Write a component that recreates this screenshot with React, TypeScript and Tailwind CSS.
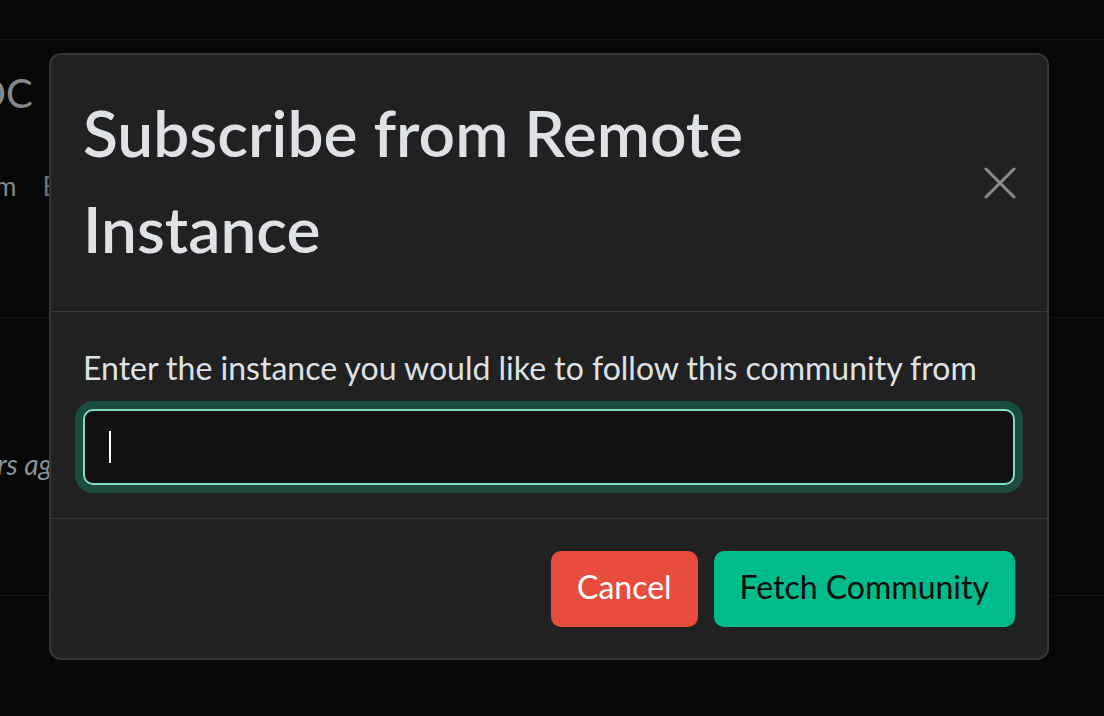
import React from "react";

function CloseIcon() {
  return (
    <svg width="32" height="32" viewBox="0 0 32 32" fill="none">
      <path d="M2 2L30 30M30 2L2 30" stroke="#8c8c8c" strokeWidth="3" strokeLinecap="round" />
    </svg>
  );
}

export default function App() {
  return (
    <div className="relative w-[1104px] h-[716px] overflow-hidden bg-[#070707]" style={{ fontFamily: "Lato, 'Noto Sans', sans-serif" }}>
      {/* background page */}
      <div className="flex flex-col">
        <div className="h-[40px] border-b border-[#141414]" />
        <div className="flex flex-col h-[278px] border-b border-[#141414]">
          <div className="mt-[29px] ml-[-26px] text-[40px] leading-[48px] text-[#85898d]">OC</div>
          <div className="mt-[53px] flex items-baseline gap-[26px] text-[26px] leading-[32px]">
            <span className="ml-[-5px] text-[#85898d]">m</span>
            <span className="text-[#6a6e72]">Ex</span>
          </div>
        </div>
        <div className="flex flex-col h-[278px] border-b border-[#141414]">
          <div className="mt-[128px] ml-[-3px] italic text-[28px] leading-[36px] text-[#8a939b]">rs ago</div>
        </div>
      </div>

      {/* modal */}
      <div className="absolute left-[49px] top-[53px] w-[1000px] flex flex-col rounded-[12px] border-2 border-[#363636] bg-[#212121]">
        <div className="flex items-center justify-between pl-[32px] pr-[31px] pt-[30px] pb-[34px] border-b border-[#383838]">
          <h2 className="w-[860px] text-[64px] leading-[96px] font-semibold text-[#dee2e6]">Subscribe from Remote Instance</h2>
          <button className="flex items-center justify-center w-[32px] h-[32px] mt-[4px]">
            <CloseIcon />
          </button>
        </div>
        <div className="flex flex-col px-[32px] pt-[32px] pb-[33px] border-b border-[#383838]">
          <label className="mb-[17px] text-[32px] leading-[48px] text-[#dee2e6]">Enter the instance you would like to follow this community from</label>
          <div className="h-[76px] flex items-center pl-[24px] rounded-[10px] border-2 border-[#7fdcc3] bg-[#111111] shadow-[0_0_0_8px_#1a4b3e]">
            <div className="w-[2px] h-[32px] bg-white" />
          </div>
        </div>
        <div className="flex justify-end gap-[16px] pl-[32px] pr-[32px] pt-[32px] pb-[31px]">
          <button className="h-[76px] px-[26px] pb-[4px] rounded-[10px] bg-[#e74c3c] text-white text-[32px] leading-[48px]">Cancel</button>
          <button className="h-[76px] px-[26px] pb-[4px] rounded-[10px] bg-[#00bc8c] text-[#0b0b0b] text-[32px] leading-[48px]">Fetch Community</button>
        </div>
      </div>
    </div>
  );
}
